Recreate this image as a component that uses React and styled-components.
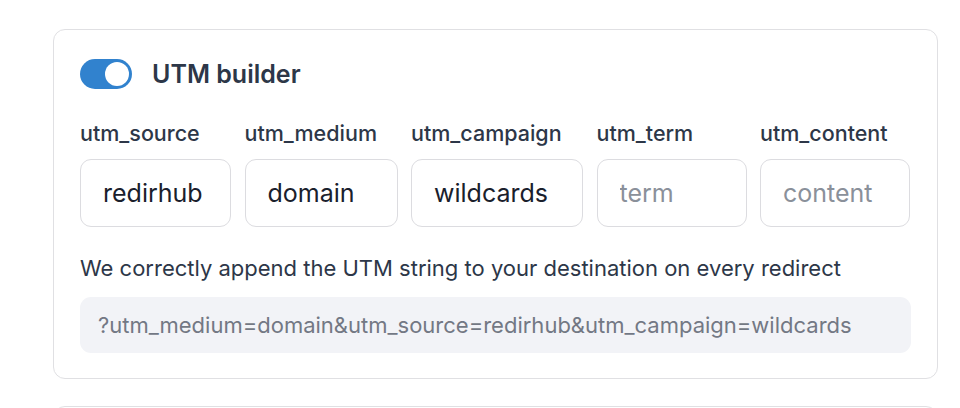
import React from "react";
import styled, { createGlobalStyle } from "styled-components";

const Global = createGlobalStyle`
  html, body { margin: 0; padding: 0; background: #ffffff; }
  body { font-family: Inter, "Noto Sans", sans-serif; -webkit-font-smoothing: antialiased; }
  * { box-sizing: border-box; }
`;

const Page = styled.div`
  width: 960px;
  height: 408px;
  overflow: hidden;
  padding: 29px 22px 0 53px;
  display: flex;
  flex-direction: column;
  gap: 27px;
`;

const Card = styled.section`
  width: 885px;
  flex-shrink: 0;
  border: 1px solid #e0e0e3;
  border-radius: 12px;
  background: #fff;
  padding: 28px 26px 25px 26px;
  display: flex;
  flex-direction: column;
`;

const Header = styled.div`
  display: flex;
  align-items: center;
  gap: 20px;
  height: 32px;
`;

const Toggle = styled.button`
  width: 52px;
  height: 30px;
  border-radius: 15px;
  border: none;
  padding: 3px;
  background: ${(p) => (p.$on ? "#3182ce" : "#cbd5e0")};
  display: flex;
  justify-content: ${(p) => (p.$on ? "flex-end" : "flex-start")};
  align-items: center;
  cursor: pointer;
`;

const Knob = styled.span`
  width: 24px;
  height: 24px;
  border-radius: 50%;
  background: #fff;
`;

const Title = styled.h2`
  margin: 0;
  font-size: 25px;
  font-weight: 600;
  color: #2d3748;
`;

const Fields = styled.div`
  display: flex;
  gap: 13.5px;
  margin-top: 30px;
`;

const Field = styled.label`
  display: flex;
  flex-direction: column;
  gap: 13px;
  width: ${(p) => p.$w}px;
  flex-shrink: 0;
`;

const FieldLabel = styled.span`
  font-size: 21.5px;
  font-weight: 500;
  color: #2d3748;
  line-height: 26px;
  white-space: nowrap;
`;

const Input = styled.input`
  width: 100%;
  height: 68px;
  border: 1px solid #dcdce0;
  border-radius: 11px;
  padding: 0 22px;
  font-family: inherit;
  font-size: 25px;
  color: #1a202c;
  background: #fff;
  outline: none;
  &::placeholder { color: #8a909a; }
`;

const Help = styled.p`
  margin: 28px 0 0 0;
  font-size: 22px;
  line-height: 26px;
  color: #2d3748;
  white-space: nowrap;
`;

const Code = styled.div`
  margin-top: 16px;
  height: 56px;
  border-radius: 11px;
  background: #f2f3f7;
  display: flex;
  align-items: center;
  padding: 0 18px;
  font-size: 22px;
  color: #737884;
  white-space: nowrap;
`;

const fields = [
  { name: "utm_source", value: "redirhub", w: 151 },
  { name: "utm_medium", value: "domain", w: 153 },
  { name: "utm_campaign", value: "wildcards", w: 172 },
  { name: "utm_term", placeholder: "term", w: 150 },
  { name: "utm_content", placeholder: "content", w: 150 },
];

export default function App() {
  return (
    <>
      <Global />
      <Page>
        <Card>
          <Header>
            <Toggle $on aria-label="toggle">
              <Knob />
            </Toggle>
            <Title>UTM builder</Title>
          </Header>
          <Fields>
            {fields.map((f) => (
              <Field key={f.name} $w={f.w}>
                <FieldLabel>{f.name}</FieldLabel>
                <Input defaultValue={f.value} placeholder={f.placeholder} />
              </Field>
            ))}
          </Fields>
          <Help>We correctly append the UTM string to your destination on every redirect</Help>
          <Code>?utm_medium=domain&amp;utm_source=redirhub&amp;utm_campaign=wildcards</Code>
        </Card>
        <Card />
      </Page>
    </>
  );
}
